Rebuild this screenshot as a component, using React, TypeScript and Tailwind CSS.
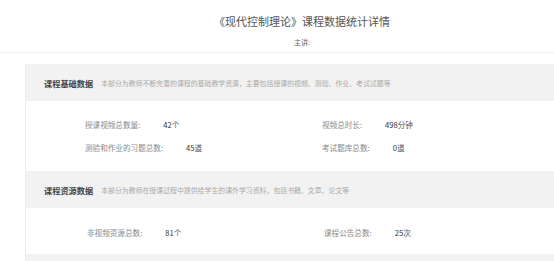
const font = "font-['Noto_Sans_CJK_SC','Noto_Sans',sans-serif]"

type Stat = { label: string; value: string; unit: string }

const basicStats: Stat[] = [
  { label: '授课视频总数量', value: '42', unit: '个' },
  { label: '视频总时长', value: '498', unit: '分钟' },
  { label: '测验和作业的习题总数', value: '45', unit: '道' },
  { label: '考试题库总数', value: '0', unit: '道' },
]

const resourceStats: Stat[] = [
  { label: '非视频资源总数', value: '81', unit: '个' },
  { label: '课程公告总数', value: '25', unit: '次' },
]

function SectionHeader({ title, desc }: { title: string; desc: string }) {
  return (
    <div className="h-[37px] bg-[#f2f2f2] flex items-center px-[18px]">
      <span className="text-[8.2px] leading-[12px] font-bold text-[#444]">{title}</span>
      <span className="ml-[8px] text-[6.9px] leading-[10px] text-[#aaa] whitespace-nowrap">{desc}</span>
    </div>
  )
}

function StatItem({ stat }: { stat: Stat }) {
  return (
    <div className="flex items-center text-[7.6px] leading-[12px] whitespace-nowrap">
      <span className="text-[#8a8a8a]">{stat.label}:</span>
      <span className="ml-[23px] text-[#333]">
        {stat.value}
        <span className="text-[#555]">{stat.unit}</span>
      </span>
    </div>
  )
}

export default function App() {
  return (
    <div className={`w-full h-[261px] overflow-hidden bg-white ${font}`}>
      <div className="w-[604px]">
        {/* 页头 */}
        <header className="h-[53px] border-b border-[#efefef] flex flex-col items-center">
          <h1 className="pt-[13px] text-[11px] leading-[16px] text-[#555]">
            《现代控制理论》课程数据统计详情
          </h1>
          <p className="mt-[8px] text-[7px] leading-[10px] text-[#666]">主讲:</p>
        </header>

        <main className="mx-[25px] mt-[11px] border-l border-[#ececec]">
          {/* 课程基础数据 */}
          <SectionHeader
            title="课程基础数据"
            desc="本部分为教师不断完善的课程的基础教学资源，主要包括授课的视频、测验、作业、考试试题等"
          />
          <div className="h-[70px] bg-white pt-[18px] pl-[59px] grid grid-cols-[237px_1fr] gap-y-[10.5px] content-start">
            {basicStats.map((s) => (
              <StatItem key={s.label} stat={s} />
            ))}
          </div>

          {/* 课程资源数据 */}
          <SectionHeader
            title="课程资源数据"
            desc="本部分为教师在授课过程中提供给学生的课外学习资料，包括书籍、文章、论文等"
          />
          <div className="h-[46px] bg-white pt-[19px] pl-[61px] grid grid-cols-[237px_1fr] content-start">
            {resourceStats.map((s) => (
              <StatItem key={s.label} stat={s} />
            ))}
          </div>

          <div className="h-[37px] bg-[#f2f2f2]" />
        </main>
      </div>
    </div>
  )
}
